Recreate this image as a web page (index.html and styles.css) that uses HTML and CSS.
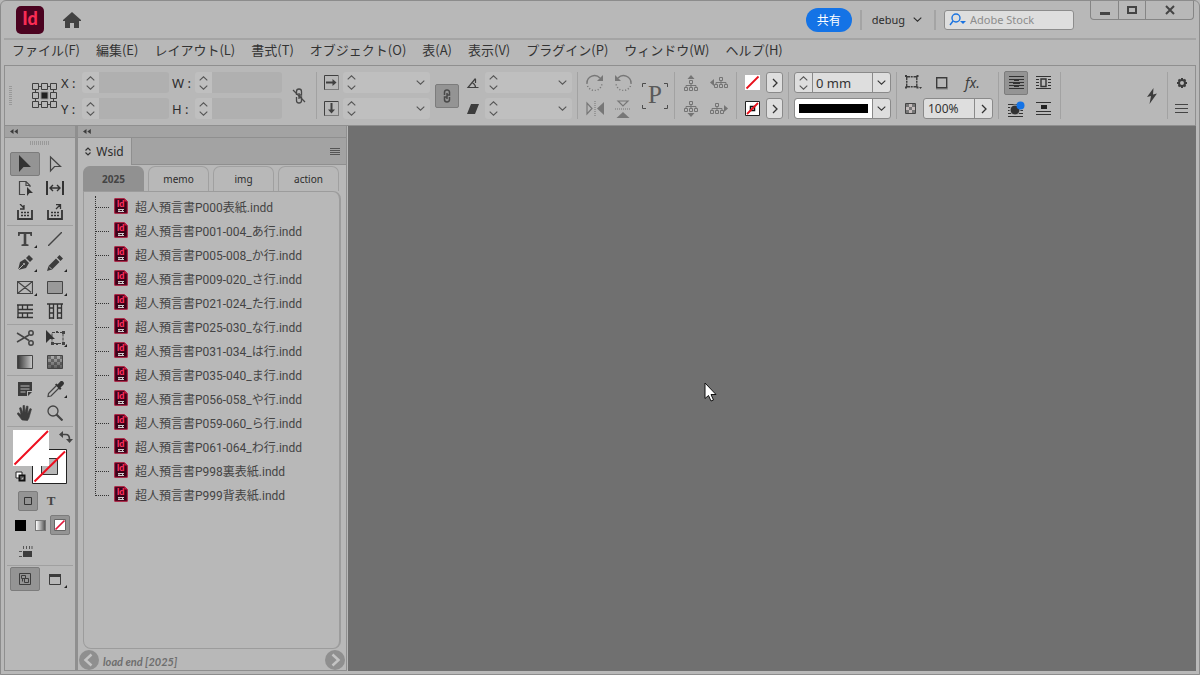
FILE: index.html
```html
<!DOCTYPE html>
<html lang="ja">
<head>
<meta charset="utf-8">
<title>InDesign</title>
<link rel="stylesheet" href="styles.css">
</head>
<body>
<svg class="defs" aria-hidden="true">
  <symbol id="up" viewBox="0 0 9 5"><path d="M.7 4.3 4.5.8l3.800 3.500" fill="none" stroke="currentColor" stroke-width="1.1"/></symbol>
  <symbol id="down" viewBox="0 0 9 5"><path d="M.7.7 4.500 4.200 8.300.7" fill="none" stroke="currentColor" stroke-width="1.1"/></symbol>
  <symbol id="right" viewBox="0 0 6 10"><path d="M1 1l4 4-4 4" fill="none" stroke="currentColor" stroke-width="1.3"/></symbol>
  <symbol id="collapse" viewBox="0 0 8 5"><path d="M3.500 0v5L0 2.500zM7.800 0v5L4.300 2.500z" fill="#3c3c3c"/></symbol>
  <symbol id="tree" viewBox="0 0 14 11"><path d="M5.500.5h3v3h-3zM7 3.500v4M2 7.500v-2h10v2M.5 7.500h3v3h-3zM5.500 7.500h3v3h-3zM10.500 7.500h3v3h-3z" fill="none" stroke="#747474"/></symbol>
  <symbol id="doc" viewBox="0 0 14 16"><path d="M.7.7h9.800l2.800 2.800v11.800H.7z" fill="#3c0218" stroke="#b0183c"/><path d="M10.500.5l3 3h-3z" fill="#d01c48"/><text x="6.500" y="9" font-size="9" font-weight="900" font-family="Lato" text-anchor="middle" fill="#ff2f60">Id</text><path d="M4 11.500h6M4 13.500h6M5 11v3M8.500 11v3" stroke="#ccc" fill="none"/></symbol>
</svg>
<div class="window">
  <header class="titlebar">
    <svg class="logo" viewBox="0 0 28 28"><rect width="28" height="28" rx="5" fill="#4b0320"/><text x="14" y="19" text-anchor="middle" font-family="Lato" font-weight="900" font-size="18" fill="#f82c54">Id</text></svg>
    <button class="home" aria-label="Home"><svg width="18" height="16" viewBox="0 0 18 16"><path d="M9 0l9 8v1h-2v7h-5v-5H7v5H2V9H0V8z" fill="#424242"/></svg></button>
    <button class="share">共有</button>
    <span class="tsep"></span>
    <button class="workspace">debug <svg width="9" height="5"><use href="#down"/></svg></button>
    <span class="tsep"></span>
    <label class="search">
      <svg width="18" height="14" viewBox="0 0 18 14" fill="none" stroke="#1a73e0" stroke-width="1.400"><circle cx="7" cy="5" r="4"/><path d="M4 8L1 12"/><path d="M11 8h6l-3 3z" fill="#1a73e0" stroke="none"/></svg>
      <input type="text" placeholder="Adobe Stock" aria-label="Adobe Stock">
    </label>
    <div class="winbtns">
      <button aria-label="Minimize"><svg width="10" height="10" viewBox="0 0 10 10"><path d="M0 7h10v3H0z" fill="#444"/></svg></button>
      <button aria-label="Maximize"><svg width="10" height="10" viewBox="0 0 10 10"><path d="M1 2h8v6H1z" fill="none" stroke="#444" stroke-width="2"/></svg></button>
      <button aria-label="Close"><svg width="10" height="10" viewBox="0 0 10 10"><path d="M1 1l8 8M9 1L1 9" stroke="#444" stroke-width="2"/></svg></button>
    </div>
  </header>
  <nav class="menubar">
    <button>ファイル(F)</button><button>編集(E)</button><button>レイアウト(L)</button><button>書式(T)</button><button>オブジェクト(O)</button><button>表(A)</button><button>表示(V)</button><button>プラグイン(P)</button><button>ウィンドウ(W)</button><button>ヘルプ(H)</button>
  </nav>

  <section class="control">
    <span class="vgrip"></span>
    <svg class="refpoint" width="27" height="27" viewBox="0 0 27 27" fill="none" stroke="#3f3f3f"><path d="M1.500 1.500h6v6h-6zM10.500 1.500h6v6h-6zM19.500 1.500h6v6h-6zM1.500 10.500h6v6h-6zM19.500 10.500h6v6h-6zM1.500 19.500h6v6h-6zM10.500 19.500h6v6h-6zM19.500 19.500h6v6h-6zM7.500 4.500h3M16.500 4.500h3M7.500 22.500h3M16.500 22.500h3M4.500 7.500v3M4.500 16.500v3M22.500 7.500v3M22.500 16.500v3"/><path d="M10 10h7v7h-7z" fill="#222" stroke="#8f8f8f"/></svg>
    <div class="coords">
      <label for="fx">X :</label><span class="step"><button aria-label="X up"><svg><use href="#up"/></svg></button><button aria-label="X down"><svg><use href="#down"/></svg></button></span><input id="fx" disabled>
      <label for="fw">W :</label><span class="step"><button aria-label="W up"><svg><use href="#up"/></svg></button><button aria-label="W down"><svg><use href="#down"/></svg></button></span><input id="fw" disabled>
      <label for="fy">Y :</label><span class="step"><button aria-label="Y up"><svg><use href="#up"/></svg></button><button aria-label="Y down"><svg><use href="#down"/></svg></button></span><input id="fy" disabled>
      <label for="fh">H :</label><span class="step"><button aria-label="H up"><svg><use href="#up"/></svg></button><button aria-label="H down"><svg><use href="#down"/></svg></button></span><input id="fh" disabled>
    </div>
    <button class="bare unlink" aria-label="Constrain size"><svg width="14" height="16" viewBox="0 0 14 16" fill="none" stroke="#484848" stroke-width="1.300"><path d="M4.500 7V3.500a2.500 2.500 0 0 1 5 0V7H7.500M4.500 9v3.500a2.500 2.500 0 0 0 5 0V9H7.500M7 5v6"/><path d="M1 2l12 12"/></svg></button>
    <span class="sep"></span>
    <div class="scale">
      <svg width="15" height="15" viewBox="0 0 15 15" fill="none" stroke="#404040"><path d="M14.500.5H.5v14"/><path d="M.5 14.500h14V.5" stroke-dasharray="1 1"/><path d="M2 7.500h8" stroke-width="2"/><path d="M8.500 4l4 3.500-4 3.500z" fill="#404040" stroke="none"/></svg>
      <span class="combo"><select disabled aria-label="Scale X"></select><svg class="l"><use href="#up"/></svg><svg class="l b"><use href="#down"/></svg><svg class="r"><use href="#down"/></svg></span>
      <svg width="15" height="15" viewBox="0 0 15 15" fill="none" stroke="#404040"><path d="M14.500.5H.5v14"/><path d="M.5 14.500h14V.5" stroke-dasharray="1 1"/><path d="M7.500 2v8" stroke-width="2"/><path d="M4 8.500l3.500 4 3.500-4z" fill="#404040" stroke="none"/></svg>
      <span class="combo"><select disabled aria-label="Scale Y"></select><svg class="l"><use href="#up"/></svg><svg class="l b"><use href="#down"/></svg><svg class="r"><use href="#down"/></svg></span>
    </div>
    <button class="on link" aria-label="Constrain scale"><svg width="8" height="14" viewBox="0 0 8 14" fill="none" stroke="#484848" stroke-width="1.500"><path d="M1.500 6V3.200a2.500 2.200 0 0 1 5 0V6H4M6.500 8v2.800a2.500 2.200 0 0 1-5 0V8H4M4 4v6"/></svg></button>
    <div class="scale shear">
      <svg width="14" height="12" viewBox="0 0 14 12" fill="none" stroke="#404040" stroke-width="1.200"><path d="M12.500 10.500H2L9.500 1.500"/><path d="M6.500 6a5 5 0 0 1 3 4.500M9.500 2v4"/></svg>
      <span class="combo"><select disabled aria-label="Rotation"></select><svg class="l"><use href="#up"/></svg><svg class="l b"><use href="#down"/></svg><svg class="r"><use href="#down"/></svg></span>
      <svg width="14" height="12" viewBox="0 0 14 12"><path d="M5 1h8L9 11H1z" fill="#3c3c3c"/></svg>
      <span class="combo"><select disabled aria-label="Shear"></select><svg class="l"><use href="#up"/></svg><svg class="l b"><use href="#down"/></svg><svg class="r"><use href="#down"/></svg></span>
    </div>
    <span class="sep"></span>
    <div class="icons rot">
      <button class="bare" aria-label="Rotate 90 clockwise"><svg width="18" height="17" viewBox="0 0 18 17" fill="none" stroke="#777" stroke-width="1.500"><path d="M1 9a7.500 7.500 0 0 1 13-5"/><path d="M1 9a7.500 7.500 0 0 0 15 0" stroke-dasharray="1 2"/><path d="M17 1v6h-6z" fill="#777" stroke="none"/></svg></button>
      <button class="bare" aria-label="Rotate 90 counterclockwise"><svg width="18" height="17" viewBox="0 0 18 17" fill="none" stroke="#777" stroke-width="1.500"><path d="M17 9A7.500 7.500 0 0 0 4 4"/><path d="M17 9a7.500 7.500 0 0 1-15 0" stroke-dasharray="1 2"/><path d="M1 1v6h6z" fill="#777" stroke="none"/></svg></button>
      <button class="bare" aria-label="Flip horizontal"><svg width="18" height="15" viewBox="0 0 18 15" fill="none" stroke="#777"><path d="M1 2v11l5-5.500z" stroke-width="1.200"/><path d="M9 0v15" stroke-dasharray="1 1"/><path d="M18 1v13l-7-6.500z" fill="#777" stroke="none"/></svg></button>
      <button class="bare" aria-label="Flip vertical"><svg width="16" height="18" viewBox="0 0 16 18" fill="none" stroke="#777"><path d="M3 1h10L8 6z" stroke-width="1.200"/><path d="M0 9h16" stroke-dasharray="1 1"/><path d="M1.500 18h13L8 12z" fill="#777" stroke="none"/></svg></button>
    </div>
    <svg class="pmark" width="26" height="26" viewBox="0 0 26 26"><path d="M4 .5H.5V4M22 .5h3.500V4M4 25.500H.5V22M22 25.500h3.500V22" fill="none" stroke="#4c4c4c"/><text x="13" y="20" text-anchor="middle" font-family="Liberation Serif" font-size="25" fill="#5a5a5a">P</text></svg>
    <span class="sep"></span>
    <div class="icons trees">
      <button class="bare" aria-label="Select container"><svg width="14" height="16" viewBox="0 0 14 16"><path d="M3.500 4h7L7 0z" fill="#747474"/><use href="#tree" y="5" width="14" height="11"/></svg></button>
      <button class="bare" aria-label="Select previous"><svg width="18" height="11" viewBox="0 0 18 11"><path d="M4 2v7L0 5.500z" fill="#747474"/><use href="#tree" x="4" width="14" height="11"/></svg></button>
      <button class="bare" aria-label="Select content"><svg width="14" height="16" viewBox="0 0 14 16"><path d="M3.500 12h7L7 16z" fill="#747474"/><use href="#tree" width="14" height="11"/></svg></button>
      <button class="bare" aria-label="Select next"><svg width="18" height="11" viewBox="0 0 18 11"><path d="M14 2v7l4-3.500z" fill="#747474"/><use href="#tree" width="14" height="11"/></svg></button>
    </div>
    <span class="sep"></span>
    <div class="icons swatches">
      <svg width="15" height="15" viewBox="0 0 15 15"><path d="M0 0h15v15H0z" fill="#fff"/><path d="M1.500 13.500l12-12" stroke="#e8101c" stroke-width="1.800"/></svg>
      <button class="field" aria-label="Fill"><svg width="6" height="10"><use href="#right"/></svg></button>
      <svg width="15" height="15" viewBox="0 0 15 15"><path d="M.5.5h14v14H.5z" fill="#fff" stroke="#222"/><path d="M5.500 5.500h4v4h-4z" fill="none" stroke="#111" stroke-width="1.500"/><path d="M2 13L13 2" stroke="#e8101c" stroke-width="1.800"/></svg>
      <button class="field" aria-label="Stroke"><svg width="6" height="10"><use href="#right"/></svg></button>
    </div>
    <span class="sep"></span>
    <div class="stroke">
      <div class="field weight"><span class="step"><button aria-label="Weight up"><svg><use href="#up"/></svg></button><button aria-label="Weight down"><svg><use href="#down"/></svg></button></span><input value="0 mm" aria-label="Stroke weight"><button class="drop" aria-label="Weight list"><svg width="9" height="5"><use href="#down"/></svg></button></div>
      <div class="field weight"><span class="line"></span><button class="drop" aria-label="Stroke type"><svg width="9" height="5"><use href="#down"/></svg></button></div>
    </div>
    <span class="sep"></span>
    <div class="effects">
      <div class="row">
        <svg width="17" height="15" viewBox="0 0 17 15" fill="none" stroke="#3c3c3c" stroke-width="1.400"><path d="M1.700 5V1.700H5M8.500 1.700h3.300V5M1.700 8.500v3.300H5M8.500 11.800h3.300V8.500"/><path d="M0 0h2v2H0zM11.500 0h2v2h-2zM0 11.500h2v2H0zM11.500 11.500h2v2h-2zM5.700 1h2v1.500h-2zM5.700 11h2v1.500h-2zM1 5.700h1.500v2H1zM11 5.700h1.500v2H11z" fill="#3c3c3c" stroke="none"/><path d="M14 12h3l-1.500 2z" fill="#3c3c3c" stroke="none"/></svg>
        <svg width="14" height="15" viewBox="0 0 14 15"><path d="M1 12h12v3H1z" fill="#a0a0a0"/><path d="M1.700 2.700h10v10h-10z" fill="#b8b8b8" stroke="#3c3c3c" stroke-width="1.400"/></svg>
        <button class="bare fx">fx.</button>
      </div>
      <div class="row">
        <svg width="11" height="11" viewBox="0 0 11 11"><path d="M.5.5h10v10H.5z" fill="#c4bcbc" stroke="#444"/><path d="M1 1h3v3H1zM7 1h3v3H7zM4 4h3v3H4zM1 7h3v3H1zM7 7h3v3H7z" fill="#777"/></svg>
        <div class="field opacity"><input value="100%" aria-label="Opacity"><button class="drop" aria-label="Opacity list"><svg width="6" height="10"><use href="#right"/></svg></button></div>
      </div>
    </div>
    <span class="sep"></span>
    <div class="icons wrap">
      <button class="on" aria-label="No text wrap"><svg width="15" height="13" viewBox="0 0 15 13"><path d="M0 .5h15M0 3.500h15M0 6.500h15M0 9.500h15M0 12.500h15" stroke="#333"/><path d="M5 3h5v2H5zM4 6h7v2H4zM5 9h5v2H5z" fill="#333"/></svg></button>
      <button class="bare" aria-label="Wrap bounding box"><svg width="15" height="13" viewBox="0 0 15 13" fill="none" stroke="#333"><path d="M0 .5h15M0 3.500h3M12 3.500h3M0 6.500h3M12 6.500h3M0 9.500h3M12 9.500h3M0 12.500h15"/><path d="M5 3h5v7.500H5z" stroke-width="1.400"/></svg></button>
      <button class="bare" aria-label="Wrap object shape"><svg width="17" height="16" viewBox="0 0 17 16"><path d="M0 3.500h15M0 6.500h15M0 9.500h15M0 12.500h15M0 15.500h15" stroke="#333"/><circle cx="7" cy="9" r="5" fill="#333" stroke="#b8b8b8"/><circle cx="12.500" cy="4.500" r="4" fill="#1473e6"/></svg></button>
      <button class="bare" aria-label="Jump object"><svg width="15" height="13" viewBox="0 0 15 13"><path d="M0 .5h15M0 9.500h15M0 12.500h15" stroke="#333"/><path d="M5 3h6v4H5z" fill="#222"/></svg></button>
    </div>
    <span class="sep"></span>
    <span class="grow"></span>
    <button class="bare bolt" aria-label="Quick apply"><svg width="10" height="16" viewBox="0 0 10 16"><path d="M6.500 0L0 9l4-1-1.500 8L10 5.500 6 6.500z" fill="#3c3c3c"/></svg></button>
    <span class="sep"></span>
    <div class="icons cfg">
      <button class="bare" aria-label="Settings"><svg width="12" height="12" viewBox="-6 -6 12 12"><path d="M0-5V5M-5 0H5M-3.500-3.500l7 7M3.500-3.500l-7 7" stroke="#3c3c3c" stroke-width="2"/><circle r="3" fill="#b8b8b8" stroke="#3c3c3c" stroke-width="2"/></svg></button>
      <button class="bare" aria-label="Panel menu"><svg width="13" height="9" viewBox="0 0 13 9"><path d="M0 .5h13M0 4.500h13M0 8.500h13" stroke="#444"/></svg></button>
    </div>
  </section>

  <main class="work">
    <aside class="tools">
      <div class="cap"><svg width="8" height="5"><use href="#collapse"/></svg></div>
      <span class="hgrip"></span>
      <div class="set">
        <button class="on" aria-label="Selection"><svg width="14" height="18" viewBox="0 0 14 18"><path d="M1 0v17l4.500-5H13z" fill="#333"/></svg></button>
        <button aria-label="Direct selection"><svg width="14" height="18" viewBox="0 0 14 18"><path d="M2.500 2v14l4-4.500h6z" fill="none" stroke="#444" stroke-width="1.200"/></svg></button>
        <button aria-label="Page"><svg width="16" height="16" viewBox="0 0 16 16"><path d="M8 14.500H2.500V1.500H9l4 4V7M9 1.500v4h4" fill="none" stroke="#444" stroke-width="1.200"/><path d="M10 7v9l2.500-3H16z" fill="#333"/></svg></button>
        <button aria-label="Gap"><svg width="18" height="14" viewBox="0 0 18 14"><path d="M1 0v14M17 0v14" stroke="#333" stroke-width="2"/><path d="M4 7h10M7 4L4 7l3 3M11 4l3 3-3 3" fill="none" stroke="#333" stroke-width="1.400"/></svg></button>
        <button aria-label="Content collector"><svg width="16" height="16" viewBox="0 0 16 16"><path d="M1 6v9h14V6" fill="none" stroke="#333" stroke-width="1.800"/><path d="M4 8.500h8M4 11.500h8" stroke="#333" stroke-width="1.700" stroke-dasharray="2 1"/><path d="M3 0l4 4M7 1v4H3" fill="none" stroke="#333" stroke-width="1.300"/></svg></button>
        <button aria-label="Content placer"><svg width="16" height="16" viewBox="0 0 16 16"><path d="M1 6v9h14V6" fill="none" stroke="#333" stroke-width="1.800"/><path d="M4 8.500h8M4 11.500h8" stroke="#333" stroke-width="1.700" stroke-dasharray="2 1"/><path d="M9 5l4-4M9 .7h4.500V5" fill="none" stroke="#333" stroke-width="1.300"/></svg></button>
      </div>
      <hr>
      <div class="set">
        <button class="more" aria-label="Type"><svg width="14" height="14" viewBox="0 0 14 14"><path d="M0 0h14v4h-1.500L12 2H8.300v10l2.200.5V14h-7v-1.500l2.200-.5V2H2l-.5 2H0z" fill="#444"/></svg></button>
        <button aria-label="Line"><svg width="14" height="14" viewBox="0 0 14 14"><path d="M0 14L14 0" stroke="#444" stroke-width="1.400"/></svg></button>
        <button class="more" aria-label="Pen"><svg width="16" height="16" viewBox="0 0 16 16"><path d="M1 15L3 7l5-3 4 4-3 5z" fill="#3c3c3c"/><path d="M9 3l3-3 4 4-3 3z" fill="#3c3c3c"/><path d="M1 15l5-5" stroke="#b8b8b8"/><circle cx="7" cy="9" r="1" fill="#b8b8b8"/></svg></button>
        <button class="more" aria-label="Pencil"><svg width="16" height="16" viewBox="0 0 16 16"><path d="M0 16l1.500-5L9 3.500 12.500 7 5 14.500zM10 2.500L12.500 0 16 3.500 13.500 6z" fill="#3c3c3c"/><path d="M2 11.500l2.500 2.500" stroke="#b8b8b8"/></svg></button>
        <button class="more" aria-label="Rectangle frame"><svg width="16" height="13" viewBox="0 0 16 13"><path d="M.5.5h15v12H.5zM.5.5l15 12M15.500.5l-15 12" fill="none" stroke="#444" stroke-width="1.200"/></svg></button>
        <button class="more" aria-label="Rectangle"><svg width="16" height="13" viewBox="0 0 16 13"><path d="M.5.5h15v12H.5z" fill="#999" stroke="#444"/></svg></button>
        <button aria-label="Horizontal grid"><svg width="16" height="15" viewBox="0 0 16 15"><path d="M0 1h16M1 5.500h15M1 9h15M0 13.500h16M1 1v13M5.500 1v4M5.500 9v4M10.500 1v4M10.500 9v4" stroke="#333" stroke-width="1.300"/></svg></button>
        <button aria-label="Vertical grid"><svg width="16" height="16" viewBox="0 0 16 16"><path d="M0 1h16M2.500 1v15M6.500 1v15M10.500 1v15M14.500 1v15M3 5h4M3 10h4M3 15h4M11 5h4M11 10h4M11 15h4" stroke="#333" stroke-width="1.300"/></svg></button>
      </div>
      <hr>
      <div class="set">
        <button aria-label="Scissors"><svg width="18" height="16" viewBox="0 0 18 16" fill="none" stroke="#444" stroke-width="1.500"><path d="M1 3l12 7.500M1 12l12-7"/><circle cx="15" cy="3" r="2.200"/><circle cx="15" cy="13" r="2.200"/></svg></button>
        <button class="more" aria-label="Free transform"><svg width="20" height="16" viewBox="0 0 20 16"><path d="M7 2.500h11v11H7z" fill="none" stroke="#444" stroke-dasharray="3 1"/><path d="M17 1h3v3h-3zM17 12h3v3h-3zM6 12h3v3H6zM11 1h2v2h-2zM11 13h2v2h-2z" fill="#444"/><path d="M1 0v13l4-4h5z" fill="#333"/></svg></button>
        <button aria-label="Gradient"><svg width="16" height="14" viewBox="0 0 16 14"><defs><linearGradient id="g1"><stop stop-color="#333"/><stop offset="1" stop-color="#ccc"/></linearGradient><linearGradient id="g2" x2="0" y2="1"><stop stop-color="#333" stop-opacity=".1"/><stop offset="1" stop-color="#333"/></linearGradient></defs><path d="M.5.5h15v13H.5z" fill="url(#g1)" stroke="#444"/></svg></button>
        <button aria-label="Gradient feather"><svg width="16" height="14" viewBox="0 0 16 14"><path d="M0 0h16v14H0z" fill="#bbb"/><path d="M1 2.500h14M1 8.500h14" stroke="#777" stroke-width="3" stroke-dasharray="3 3"/><path d="M4 5.500h11M4 11.500h11" stroke="#777" stroke-width="3" stroke-dasharray="3 3"/><path d="M.5.5h15v13H.5z" fill="url(#g2)" fill-opacity=".7" stroke="#444"/></svg></button>
      </div>
      <hr>
      <div class="set">
        <button aria-label="Note"><svg width="14" height="14" viewBox="0 0 14 14"><path d="M0 0h14v9h-5v5H0zM10 10h4l-4 4z" fill="#3c3c3c"/><path d="M2.500 4h9M2.500 7h9M2.500 10h5" stroke="#b8b8b8"/></svg></button>
        <button class="more" aria-label="Eyedropper"><svg width="17" height="17" viewBox="0 0 17 17"><path d="M9.500 4.500l-8 8-.5 3 3-.5 8-8" fill="none" stroke="#444" stroke-width="1.200"/><path d="M8 3.500l1.500-1 1 1L13 .7a2.200 2.200 0 0 1 3.200 3.200L13.500 6.500l1 1L13 9z" fill="#333"/></svg></button>
        <button aria-label="Hand"><svg width="16" height="16" viewBox="0 0 16 16"><path d="M5 15L0 8.500l1.500-.8L4 10 2.500 3l1.500-.5L6 8V.5h1.600L8 7.500 9.600 1l1.500.3L10.700 8.500 13 3.500l1.500.6L12.500 11c-.4 2-1 3-2 4.500z" fill="#3c3c3c" stroke="#3c3c3c" stroke-width=".6"/></svg></button>
        <button aria-label="Zoom"><svg width="16" height="16" viewBox="0 0 16 16" fill="none" stroke="#444"><circle cx="6" cy="6" r="5" stroke-width="1.300"/><path d="M9.500 9.500l6 6" stroke-width="2.200"/></svg></button>
      </div>
      <hr>
      <svg class="fillstroke" width="66" height="61" viewBox="0 1 66 61">
        <path d="M21.500 22.500h34v34h-34z" fill="#fff" stroke="#222"/><path d="M30.500 31.500h16v16h-16z" fill="#b8b8b8" stroke="#333"/><path d="M2 3h36v36H2z" fill="#fff"/>
        <path d="M3.500 37.500L37 4M23.500 54.500L54 24.500" stroke="#ee1020" stroke-width="2"/>
        <path d="M52 7.500h3q3.500 0 3.500 5" fill="none" stroke="#444" stroke-width="1.700"/><path d="M52 4v7l-4-3.500zM55 12h7l-3.500 4z" fill="#444"/>
        <path d="M5 45h6v6H5z" fill="#fff" stroke="#222"/><path d="M8.500 48.500h5v5h-5z" fill="none" stroke="#111" stroke-width="2"/>
      </svg>
      <div class="modes a"><button class="on" aria-label="Format container"><svg width="8" height="8" viewBox="0 0 8 8"><path d="M.5.5h7v7h-7z" fill="none" stroke="#333"/></svg></button><button class="typeT" aria-label="Format text">T</button></div>
      <div class="modes b"><button aria-label="Apply color"><span class="chip black"></span></button><button aria-label="Apply gradient"><span class="chip grad"></span></button><button class="on" aria-label="Apply none"><svg width="12" height="12" viewBox="0 0 12 12"><path d="M.5.5h11v11H.5z" fill="#fff" stroke="#666"/><path d="M1.500 10.500l9-9" stroke="#e0183c" stroke-width="1.700"/></svg></button></div>
      <div class="set extra"><button aria-label="Guides"><svg width="14" height="12" viewBox="0 0 14 12"><path d="M4 5h9v6H4z" fill="#3c3c3c"/><path d="M4.500 0v3M7.500 0v3M10.500 0v3M13 0v3M0 5.500h3M0 10.500h3" stroke="#555"/></svg></button></div>
      <hr>
      <div class="set">
        <button class="on" aria-label="Normal view"><svg width="12" height="12" viewBox="0 0 12 12" fill="none" stroke="#3c3c3c"><path d="M.5.5h11v11H.5zM2.500 2.500h4v3h-4zM5.500 5.500h4v4h-4zM3.500 6v2.500"/></svg></button>
        <button class="more" aria-label="Screen mode"><svg width="12" height="11" viewBox="0 0 12 11"><path d="M.5.5h11v10H.5z" fill="none" stroke="#3c3c3c"/><path d="M0 0h12v3H0z" fill="#3c3c3c"/></svg></button>
      </div>
    </aside>

    <aside class="panel">
      <div class="cap"><svg width="8" height="5"><use href="#collapse"/></svg></div>
      <div class="paneltabs">
        <button class="ptab"><svg width="6" height="9" viewBox="0 0 6 9"><path d="M.5 3.500L3 1l2.500 2.500M.5 5.500L3 8l2.500-2.500" fill="none" stroke="#333" stroke-width="1.200"/></svg>Wsid</button>
        <button class="bare pmenu" aria-label="Panel menu"><svg width="10" height="8" viewBox="0 0 10 8"><path d="M0 .5h10M0 2.500h10M0 4.500h10M0 6.500h10" stroke="#555"/></svg></button>
      </div>
      <div class="body">
        <div class="tabs" role="tablist"><button role="tab" class="active">2025</button><button role="tab">memo</button><button role="tab">img</button><button role="tab">action</button></div>
        <ul class="files">
          <li><svg><use href="#doc"/></svg>超人預言書P000表紙.indd</li>
          <li><svg><use href="#doc"/></svg>超人預言書P001-004_あ行.indd</li>
          <li><svg><use href="#doc"/></svg>超人預言書P005-008_か行.indd</li>
          <li><svg><use href="#doc"/></svg>超人預言書P009-020_さ行.indd</li>
          <li><svg><use href="#doc"/></svg>超人預言書P021-024_た行.indd</li>
          <li><svg><use href="#doc"/></svg>超人預言書P025-030_な行.indd</li>
          <li><svg><use href="#doc"/></svg>超人預言書P031-034_は行.indd</li>
          <li><svg><use href="#doc"/></svg>超人預言書P035-040_ま行.indd</li>
          <li><svg><use href="#doc"/></svg>超人預言書P056-058_や行.indd</li>
          <li><svg><use href="#doc"/></svg>超人預言書P059-060_ら行.indd</li>
          <li><svg><use href="#doc"/></svg>超人預言書P061-064_わ行.indd</li>
          <li><svg><use href="#doc"/></svg>超人預言書P998裏表紙.indd</li>
          <li><svg><use href="#doc"/></svg>超人預言書P999背表紙.indd</li>
        </ul>
      </div>
      <footer class="status">
        <button class="bare" aria-label="Previous"><svg width="20" height="20" viewBox="0 0 20 20"><circle cx="10" cy="10" r="10" fill="#8f8f8f"/><path d="M12.500 4.500L6.500 10l6 5.500" fill="none" stroke="#c4c4c4" stroke-width="2.500"/></svg></button>
        <span>load end [2025]</span>
        <button class="bare" aria-label="Next"><svg width="20" height="20" viewBox="0 0 20 20"><circle cx="10" cy="10" r="10" fill="#8f8f8f"/><path d="M7.500 4.500l6 5.500-6 5.500" fill="none" stroke="#c4c4c4" stroke-width="2.500"/></svg></button>
      </footer>
    </aside>
    <div class="canvas"><svg class="cursor" width="13" height="20" viewBox="0 0 13 20"><path d="M1 1v15.500l3.500-3 2.500 5.500 2.500-1-2.500-5.500h5z" fill="#fff" stroke="#111"/></svg></div>
  </main>
</div>
</body>
</html>
```

FILE: styles.css
```css
* { box-sizing: border-box; }
body { margin: 0; background: #b8b8b8; color: #2c2c2c; font: 12px "Noto Sans", "Noto Sans CJK JP", sans-serif; }
button, input, select { font: inherit; color: inherit; margin: 0; padding: 0; border: 0; background: none; min-width: 0; border-radius: 0; }
button { display: flex; align-items: center; justify-content: center; }
svg { display: block; flex: none; }
.defs { display: none; }

.window { display: flex; flex-direction: column; min-height: 100vh; padding: 0 3px 3px; border: 1px solid #8c8c8c; border-radius: 6px 6px 0 0; background: #b8b8b8; }

.titlebar { display: flex; align-items: center; height: 39px; border-bottom: 2px solid #a4a4a4; padding-left: 12px; }
.logo { width: 28px; height: 28px; }
.home { margin-left: 19px; margin-right: auto; }
.share { width: 46px; height: 24px; border-radius: 12px; background: #1473e6; color: #fff; }
.tsep { width: 2px; height: 20px; margin-left: 8px; background: #a4a4a4; }
.workspace { gap: 8px; margin: 0 4px 0 10px; font-size: 11px; }
.search { display: flex; align-items: center; width: 130px; height: 20px; margin-left: 8px; padding-left: 4px; border: 1px solid #8c8c8c; border-radius: 3px; background: #dedede; }
.search input { width: 100px; margin-left: 3px; font-size: 11px; outline: 0; }
.search input::placeholder { color: #8c8c8c; opacity: 1; }
.winbtns { display: flex; align-self: flex-start; height: 19px; margin: 0 2px 0 16px; border: 1px solid #858585; border-top: 0; border-radius: 0 0 4px 4px; }
.winbtns button { width: 27px; }
.winbtns button + button { border-left: 1px solid #858585; }
.winbtns button:last-child { width: 48px; }

.menubar { display: flex; align-items: center; gap: 16px; height: 25px; padding: 0 8px 6px; font: 13px "Noto Sans CJK JP", sans-serif; }
.menubar button { white-space: nowrap; color: #333; }

.control { display: flex; align-items: center; height: 61px; border: 1px solid #8f8f8f; }
.bare svg { margin: auto; }
.sep { flex: none; width: 1px; height: 47px; background: #a2a2a2; }
.on { border: 1px solid #7c7c7c; border-radius: 2px; background: #949494; }
.vgrip { width: 3px; height: 20px; margin: 0 19px 0 4px; background: repeating-linear-gradient(#999 0 1px, transparent 1px 2px); }
.coords { display: grid; grid-template-columns: 24px 17px 70px 26px 17px 70px; grid-auto-rows: 21px; row-gap: 5px; align-items: center; font-size: 13px; }
.coords label { padding-left: 3px; white-space: pre; }
.coords input { width: 70px; height: 21px; background: #b0b0b0; border-radius: 0 3px 3px 0; }
.step { display: flex; flex-direction: column; justify-content: center; gap: 4px; width: 17px; height: 21px; background: #bfbfbf; border-radius: 3px 0 0 3px; color: #555; }
.step svg { width: 9px; height: 5px; }
.unlink { width: 14px; margin: 0 10px; }
.scale { display: grid; grid-template-columns: 19px 87px; grid-auto-rows: 21px; row-gap: 5px; align-items: center; margin: 0 5px 0 7px; }
.combo { position: relative; height: 21px; color: #555; }
.combo select { appearance: none; display: block; width: 100%; height: 21px; background: #bfbfbf; border-radius: 3px; opacity: 1; }
.combo svg { position: absolute; width: 9px; height: 5px; }
.combo .l { left: 4px; top: 3px; }
.combo .b { top: 13px; }
.combo .r { right: 5px; top: 8px; }
.link { width: 24px; height: 24px; }
.shear { margin-left: 7px; }
.icons { display: grid; grid-auto-rows: 21px; row-gap: 5px; align-items: center; justify-items: center; }
.rot { grid-template-columns: 28px 28px; margin-left: 3px; }
.pmark { margin: 0 6px 0 5px; }
.trees { grid-template-columns: 28px 28px; margin: 0 3px 0 2px; }
.swatches { grid-template-columns: 15px 17px; column-gap: 6px; margin: 0 5px 0 8px; }
.field { height: 21px; border: 1px solid #8a8a8a; border-radius: 3px; background: #dedede; color: #333; }
.swatches .field { width: 17px; }
.stroke { display: grid; gap: 5px; margin: 0 5px; }
.weight { display: flex; width: 97px; overflow: hidden; }
.weight .step { height: 19px; background: none; }
.weight input { flex: 1; width: 60px; padding-left: 3px; border-left: 1px solid #8a8a8a; font-size: 13px; }
.drop { width: 18px; height: 19px; border-left: 1px solid #8a8a8a; }
.line { flex: 1; height: 19px; border: solid #fff; border-width: 5px 4px 5px 4px; background: #000; }
.effects { display: grid; gap: 5px; width: 101px; padding-left: 8px; }
.row { display: flex; align-items: center; height: 21px; }
.row > svg + svg { margin-left: 13px; }
.fx { margin-left: 16px; font: italic 14px "Noto Sans", sans-serif; color: #3c3c3c; }
.opacity { display: flex; width: 70px; margin-left: 7px; }
.opacity input { width: 50px; padding-left: 4px; font-size: 12px; }
.wrap { grid-template-columns: 24px 24px; column-gap: 3px; margin: 0 5px; }
.wrap .on { width: 24px; height: 24px; }
.grow { flex: 1; }
.bolt { margin-right: 10px; }
.cfg { grid-template-columns: 27px; }

.work { display: flex; flex: 1; }
.cap { height: 12px; padding: 3px 5px; border-bottom: 1px solid #8f8f8f; background: #a3a3a3; }
.tools { flex: none; width: 73px; border: 1px solid #8f8f8f; border-width: 0 2px 1px 1px; }
.hgrip { display: block; width: 20px; height: 4px; margin: 3px 0 7px 25px; background: repeating-linear-gradient(90deg, #999 0 1px, transparent 1px 2px); }
.tools hr { height: 1px; margin: 1px 2px; border: 0; background: #a0a0a0; }
.set { display: grid; grid-template-columns: 30px 30px; grid-auto-rows: 24px; padding-left: 5px; }
.set button { position: relative; }
.more::after { content: ""; position: absolute; right: 3px; bottom: 3px; border: solid transparent; border-width: 3px 0 0 3px; border-right: 0; border-bottom: 3px solid #222; }
.fillstroke { margin-left: 6px; }
.modes { display: flex; align-items: center; }
.modes .on { width: 20px; height: 20px; }
.modes.a { height: 24px; padding-left: 13px; gap: 6px; }
.typeT { width: 14px; font: bold 13px "Liberation Serif", serif; color: #444; }
.modes.b { height: 24px; padding-left: 5px; }
.modes.b button { width: 20px; }
.chip { width: 11px; height: 11px; }
.black { background: #000; }
.grad { border: 1px solid #777; background: linear-gradient(90deg, #fff, #555); }
.extra { padding: 3px 0 0 6px; }

.panel { display: flex; flex: none; flex-direction: column; width: 270px; border: 1px solid #8f8f8f; border-width: 0 1px 1px; }
.panel .cap { flex: none; }
.paneltabs { display: flex; justify-content: space-between; height: 27px; background: linear-gradient(#8f8f8f, #8f8f8f) bottom / 100% 1px no-repeat #a3a3a3; }
.ptab { gap: 5px; width: 54px; border-right: 1px solid #8f8f8f; background: #b8b8b8; }
.pmenu { margin-right: 6px; }
.body { display: flex; flex: 1; flex-direction: column; padding: 1px 5px 0; }
.tabs { display: flex; gap: 4px; font-size: 10px; }
.tabs button { width: 61px; height: 25px; border: 1px solid #a0a0a0; border-bottom: 0; border-radius: 7px 7px 0 0; }
.tabs .active { background: #919191; border-color: #919191; font-weight: 700; color: #444; }
.files { flex: 1; list-style: none; margin: 0; padding: 2px 0 0 12px; border: 1px solid #9c9c9c; border-width: 1px 2px 1px 1px; border-radius: 0 8px 8px 8px; color: #444; font: 12px Roboto, "Noto Sans CJK JP", sans-serif; }
.files li { position: relative; display: flex; align-items: center; gap: 7px; height: 24px; padding-left: 18px; white-space: nowrap; }
.files li::before { content: ""; position: absolute; left: -1px; top: 2px; width: 13px; height: 11px; border: dotted #333; border-width: 0 0 1px 1px; }
.files li + li::before { top: -11px; height: 24px; }
.files li svg { width: 14px; height: 16px; }
.status { display: flex; flex: none; align-items: center; height: 21px; padding: 1px 1px 0; font: italic bold 11px Lato, sans-serif; color: #6e6e6e; }
.status span { margin: 0 auto 0 4px; padding-top: 3px; }

.canvas { position: relative; flex: 1; margin-left: 1px; background: #707070; }
.cursor { position: absolute; left: 42%; top: 47%; }
```
